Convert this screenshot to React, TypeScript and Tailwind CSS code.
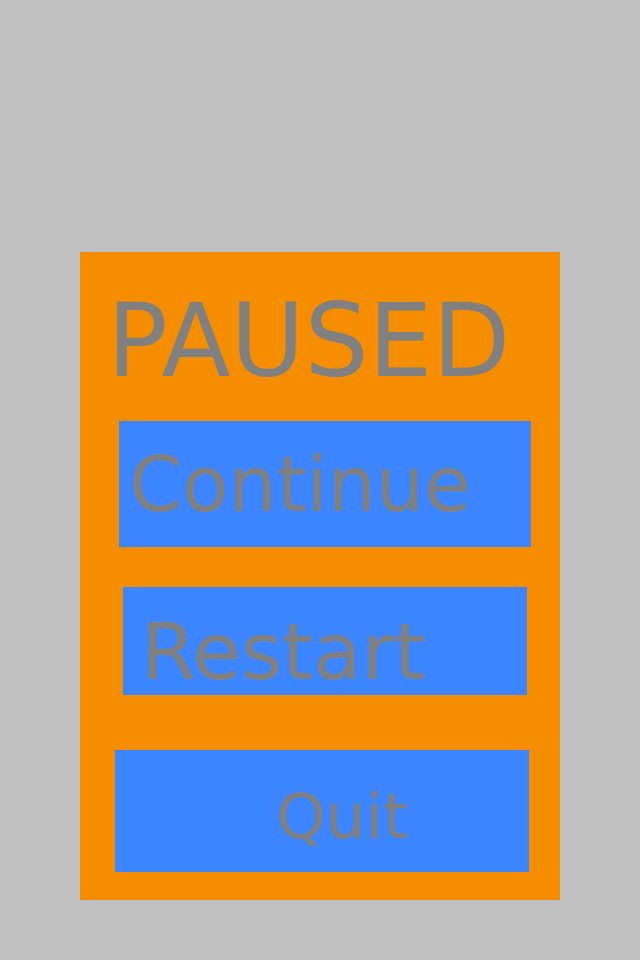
export default function App() {
  return (
    <div className="w-[640px] h-[960px] bg-[#c0c0c0] overflow-hidden" style={{ fontFamily: '"DejaVu Sans", sans-serif' }}>
      <div className="ml-[80px] mt-[252px] w-[480px] h-[648px] bg-[#f58d00] flex flex-col items-start">
        <div className="mt-[39px] ml-[27px] text-[101px] leading-none text-[#808080] h-[100px]">PAUSED</div>
        <button className="mt-[30px] ml-[39px] w-[412px] h-[126px] bg-[#3d85ff] flex items-start text-left pl-[10px] pt-[26px]">
          <span className="text-[76px] leading-none text-[#808080]">Continue</span>
        </button>
        <button className="mt-[40px] ml-[43px] w-[404px] h-[108px] bg-[#3d85ff] flex items-start text-left pl-[18px] pt-[26px]">
          <span className="text-[79px] leading-none text-[#808080]">Restart</span>
        </button>
        <button className="mt-[55px] ml-[35px] w-[414px] h-[122px] bg-[#3d85ff] flex items-start text-left pl-[161px] pt-[35px]">
          <span className="text-[63px] leading-none text-[#808080]">Quit</span>
        </button>
      </div>
    </div>
  );
}
